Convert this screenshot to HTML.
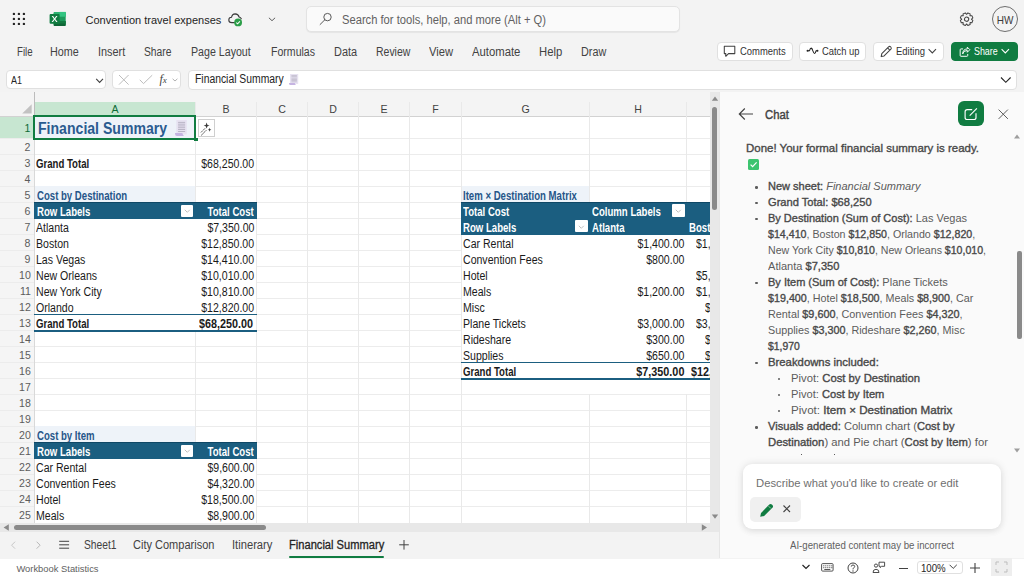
<!DOCTYPE html>
<html><head><meta charset="utf-8"><title>Excel</title>
<style>
html,body{margin:0;padding:0;}
body{width:1024px;height:576px;overflow:hidden;position:relative;background:#f3f3f3;font-family:"Liberation Sans", sans-serif;}
b{font-weight:700;}
</style></head><body>
<svg style="position:absolute;left:0px;top:0px;" width="40" height="40" viewBox="0 0 40 40"><circle cx="13.9" cy="13.9" r="1.2" fill="#242424"/><circle cx="13.9" cy="18.9" r="1.2" fill="#242424"/><circle cx="13.9" cy="23.9" r="1.2" fill="#242424"/><circle cx="18.9" cy="13.9" r="1.2" fill="#242424"/><circle cx="18.9" cy="18.9" r="1.2" fill="#242424"/><circle cx="18.9" cy="23.9" r="1.2" fill="#242424"/><circle cx="23.9" cy="13.9" r="1.2" fill="#242424"/><circle cx="23.9" cy="18.9" r="1.2" fill="#242424"/><circle cx="23.9" cy="23.9" r="1.2" fill="#242424"/></svg>
<svg style="position:absolute;left:44px;top:6px;" width="30" height="26" viewBox="0 0 30 26">
<rect x="9.7" y="5.9" width="12" height="14" rx="1" fill="#1d9a5b"/>
<path d="M10.7 5.9 H20.7 Q21.7 5.9 21.7 6.9 V10.6 H9.7 V6.9 Q9.7 5.9 10.7 5.9 Z" fill="#2cb371"/>
<rect x="15.5" y="5.9" width="6.2" height="4.7" fill="#33c481"/>
<rect x="9.7" y="15" width="12" height="4.9" rx="1" fill="#0f6636"/>
<rect x="9.7" y="15" width="12" height="2.5" fill="#127a41"/>
<rect x="5.6" y="8.1" width="10" height="9.7" rx="1" fill="#107c41"/>
<path d="M7.7 9.9 L9.1 9.9 L10.6 12.2 L12.1 9.9 L13.5 9.9 L11.3 13 L13.6 16.1 L12.2 16.1 L10.6 13.8 L9 16.1 L7.6 16.1 L9.9 13 Z" fill="#fff"/>
</svg>
<div style="position:absolute;top:14.89px;font-size:11px;line-height:11px;font-weight:400;color:#242424;white-space:nowrap;left:85.5px;transform-origin:left;">Convention travel expenses</div>
<svg style="position:absolute;left:222px;top:8px;" width="24" height="22" viewBox="0 0 24 22">
<path d="M12.5 14.6 H9.8 Q6.8 14.6 6.8 11.9 Q6.9 9.4 9.5 9.3 Q10.2 6 13.2 5.9 Q16.3 6 17.1 9 Q18.6 9.4 19.3 10.8" fill="none" stroke="#3b3b3b" stroke-width="1.1" stroke-linecap="round"/>
<circle cx="16.1" cy="14.4" r="3.9" fill="#2b9e48"/>
<path d="M14.3 14.6 L15.6 15.8 L17.9 13.3" fill="none" stroke="#fff" stroke-width="1.05"/>
</svg>
<svg style="position:absolute;left:266px;top:15px;" width="12" height="10" viewBox="0 0 12 10"><path d="M2.9 2.8 L6 5.7 L9.1 2.8" fill="none" stroke="#555" stroke-width=".95"/></svg>
<div style="position:absolute;left:305.8px;top:6.3px;width:374.6px;height:25.9px;background:#fafafa;border:1px solid #e3e3e3;border-radius:5px;box-sizing:border-box;box-shadow:0 1px 1px rgba(0,0,0,.06);"></div>
<svg style="position:absolute;left:318px;top:11px;" width="16" height="16" viewBox="0 0 16 16"><circle cx="9.5" cy="6.1" r="3.7" fill="none" stroke="#505050" stroke-width=".95"/><path d="M6.9 8.7 L2.1 13.5" stroke="#505050" stroke-width=".95" stroke-linecap="round"/></svg>
<div style="position:absolute;left:341.8px;top:13.74px;font-size:12px;line-height:12px;color:#616161;white-space:nowrap;transform-origin:left;transform:scaleX(0.9310);">Search for tools, help, and more (Alt + Q)</div>
<svg style="position:absolute;left:957px;top:10px;" width="18" height="18" viewBox="0 0 18 18"><g transform="translate(9.6,9.2) rotate(22.5)"><path d="M4.59 -1.73 L6.27 -1.27 L6.27 1.27 L4.59 1.73 L4.46 2.02 L5.33 3.54 L3.54 5.33 L2.02 4.46 L1.73 4.59 L1.27 6.27 L-1.27 6.27 L-1.73 4.59 L-2.02 4.46 L-3.54 5.33 L-5.33 3.54 L-4.46 2.02 L-4.59 1.73 L-6.27 1.27 L-6.27 -1.27 L-4.59 -1.73 L-4.46 -2.02 L-5.33 -3.54 L-3.54 -5.33 L-2.02 -4.46 L-1.73 -4.59 L-1.27 -6.27 L1.27 -6.27 L1.73 -4.59 L2.02 -4.46 L3.54 -5.33 L5.33 -3.54 L4.46 -2.02 Z" fill="none" stroke="#424242" stroke-width="1" stroke-linejoin="round"/><circle r="2.1" fill="none" stroke="#424242" stroke-width="1"/></g></svg>
<div style="position:absolute;left:991.5px;top:6px;width:26px;height:26px;border:1px solid #6e6e6e;border-radius:50%;box-sizing:border-box;"></div>
<div style="position:absolute;top:15.19px;font-size:11px;line-height:11px;font-weight:400;color:#3a3a3a;white-space:nowrap;left:1004.9px;transform:translateX(-50%) scaleX(0.91);transform-origin:center;">HW</div>
<div style="position:absolute;left:716.5px;top:41.5px;width:76px;height:19.5px;background:#fff;border:1px solid #e0e0e0;border-radius:4px;box-sizing:border-box;"></div>
<div style="position:absolute;left:799.3px;top:41.5px;width:66.3px;height:19.5px;background:#fff;border:1px solid #e0e0e0;border-radius:4px;box-sizing:border-box;"></div>
<div style="position:absolute;left:872.5px;top:41.5px;width:71.8px;height:19.5px;background:#fff;border:1px solid #e0e0e0;border-radius:4px;box-sizing:border-box;"></div>
<div style="position:absolute;left:951px;top:41.5px;width:66.5px;height:19.5px;background:#107c41;border:1px solid #107c41;border-radius:4px;box-sizing:border-box;"></div>
<svg style="position:absolute;left:723px;top:45px;" width="14" height="13" viewBox="0 0 14 13"><path d="M1.3 1.3 H11.8 V8.6 H5.5 L2.8 11.3 V8.6 H1.3 Z" fill="none" stroke="#424242" stroke-width="1.05" stroke-linejoin="round"/></svg>
<svg style="position:absolute;left:805px;top:45px;" width="14" height="12" viewBox="0 0 14 12"><path d="M2.6 5.8 H4.4 Q5.3 3.1 6.2 3.1 Q7.1 3.2 7.9 5.9 Q8.8 8.5 9.6 8.5 Q10.4 8.4 11 5.8 H12.4" fill="none" stroke="#242424" stroke-width="1.1" stroke-linejoin="round"/><circle cx="2.6" cy="5.8" r="1.05" fill="#242424"/><circle cx="12.4" cy="5.8" r="1.05" fill="#242424"/></svg>
<svg style="position:absolute;left:879px;top:45px;" width="14" height="13" viewBox="0 0 14 13"><path d="M2.2 11.6 L2.8 8.6 L9.6 1.8 Q10.7 0.9 11.8 2 Q12.8 3.1 11.9 4.1 L5.1 10.9 Z M8.6 2.9 L10.8 5.1" fill="none" stroke="#424242" stroke-width="1.05" stroke-linejoin="round"/></svg>
<svg style="position:absolute;left:927px;top:46px;" width="11" height="10" viewBox="0 0 11 10"><path d="M1.6 3.2 L5.3 6.9 L9 3.2" fill="none" stroke="#424242" stroke-width="1.1"/></svg>
<svg style="position:absolute;left:957px;top:45px;" width="14" height="13" viewBox="0 0 14 13"><g transform="translate(1.9,1.4) scale(.84)"><path d="M5 3 H2.5 Q1.5 3 1.5 4 V10.8 Q1.5 11.8 2.5 11.8 H9.5 Q10.5 11.8 10.5 10.8 V9" fill="none" stroke="#fff" stroke-width="1.15"/><path d="M4.5 9 Q5 5 10 4.8 V7 L13 3.9 L10 0.9 V3 Q4.5 3.3 4.5 9 Z" fill="none" stroke="#fff" stroke-width="1.15" stroke-linejoin="round"/></g></svg>
<svg style="position:absolute;left:1000px;top:46px;" width="11" height="10" viewBox="0 0 11 10"><path d="M1.6 3.2 L5.3 6.9 L9 3.2" fill="none" stroke="#fff" stroke-width="1.1"/></svg>
<div style="position:absolute;left:6px;top:70.3px;width:100px;height:18.8px;background:#fff;border:1px solid #e0e0e0;border-radius:4px;box-sizing:border-box;"></div>
<svg style="position:absolute;left:94px;top:76px;" width="12" height="10" viewBox="0 0 12 10"><path d="M2.2 2.8 L5.6 6.4 L9 2.8" fill="none" stroke="#424242" stroke-width="1.1"/></svg>
<div style="position:absolute;left:112.2px;top:70.3px;width:69px;height:18.5px;background:#fff;border:1px solid #e0e0e0;border-radius:4px;box-sizing:border-box;"></div>
<svg style="position:absolute;left:117px;top:74px;" width="14" height="12" viewBox="0 0 14 12"><path d="M2 1 L11.6 10.6 M11.6 1 L2 10.6" stroke="#bdbdbd" stroke-width="1"/></svg>
<svg style="position:absolute;left:138px;top:74px;" width="16" height="12" viewBox="0 0 16 12"><path d="M1.8 5.8 L5.5 9.6 L14.2 1.2" fill="none" stroke="#bdbdbd" stroke-width="1"/></svg>
<div style="position:absolute;left:159.5px;top:72px;font-family:'Liberation Serif',serif;font-style:italic;font-size:12px;line-height:14px;color:#424242;">f<span style="font-size:9px;">x</span></div>
<svg style="position:absolute;left:172px;top:78px;" width="6" height="4" viewBox="0 0 6 4"><path d="M0.6 0.8 L3 3 L5.4 0.8" fill="none" stroke="#9e9e9e" stroke-width=".8"/></svg>
<div style="position:absolute;left:188px;top:70.3px;width:829px;height:19.3px;background:#fff;border:1px solid #e0e0e0;border-radius:4px;box-sizing:border-box;"></div>
<svg style="position:absolute;left:999px;top:75px;" width="14" height="10" viewBox="0 0 14 10"><path d="M2 2.5 L6.8 7.3 L11.6 2.5" fill="none" stroke="#242424" stroke-width="1.1"/></svg>
<div style="position:absolute;left:0px;top:92px;width:720px;height:466px;background:#f3f3f3;"></div>
<div style="position:absolute;left:34px;top:117px;width:676px;height:406px;background:#fff;"></div>
<div style="position:absolute;left:0px;top:92px;width:710px;height:25px;background:#f4f4f4;"></div>
<div style="position:absolute;left:0px;top:117px;width:34px;height:406px;background:#f5f5f5;"></div>
<div style="position:absolute;left:34px;top:102px;width:161px;height:15px;background:#c7e6d1;"></div>
<div style="position:absolute;left:0px;top:117px;width:34px;height:22px;background:#c7e6d1;"></div>
<div style="position:absolute;left:0px;top:138px;width:710px;height:1px;background:#ececec;"></div>
<div style="position:absolute;left:0px;top:154px;width:710px;height:1px;background:#ececec;"></div>
<div style="position:absolute;left:0px;top:170px;width:710px;height:1px;background:#ececec;"></div>
<div style="position:absolute;left:0px;top:186px;width:710px;height:1px;background:#ececec;"></div>
<div style="position:absolute;left:0px;top:202px;width:710px;height:1px;background:#ececec;"></div>
<div style="position:absolute;left:0px;top:218px;width:710px;height:1px;background:#ececec;"></div>
<div style="position:absolute;left:0px;top:234px;width:710px;height:1px;background:#ececec;"></div>
<div style="position:absolute;left:0px;top:250px;width:710px;height:1px;background:#ececec;"></div>
<div style="position:absolute;left:0px;top:266px;width:710px;height:1px;background:#ececec;"></div>
<div style="position:absolute;left:0px;top:282px;width:710px;height:1px;background:#ececec;"></div>
<div style="position:absolute;left:0px;top:298px;width:710px;height:1px;background:#ececec;"></div>
<div style="position:absolute;left:0px;top:314px;width:710px;height:1px;background:#ececec;"></div>
<div style="position:absolute;left:0px;top:330px;width:710px;height:1px;background:#ececec;"></div>
<div style="position:absolute;left:0px;top:346px;width:710px;height:1px;background:#ececec;"></div>
<div style="position:absolute;left:0px;top:362px;width:710px;height:1px;background:#ececec;"></div>
<div style="position:absolute;left:0px;top:378px;width:710px;height:1px;background:#ececec;"></div>
<div style="position:absolute;left:0px;top:394px;width:710px;height:1px;background:#ececec;"></div>
<div style="position:absolute;left:0px;top:410px;width:710px;height:1px;background:#ececec;"></div>
<div style="position:absolute;left:0px;top:426px;width:710px;height:1px;background:#ececec;"></div>
<div style="position:absolute;left:0px;top:442px;width:710px;height:1px;background:#ececec;"></div>
<div style="position:absolute;left:0px;top:458px;width:710px;height:1px;background:#ececec;"></div>
<div style="position:absolute;left:0px;top:474px;width:710px;height:1px;background:#ececec;"></div>
<div style="position:absolute;left:0px;top:490px;width:710px;height:1px;background:#ececec;"></div>
<div style="position:absolute;left:0px;top:506px;width:710px;height:1px;background:#ececec;"></div>
<div style="position:absolute;left:34px;top:115.6px;width:676px;height:1.4px;background:#d2d2d2;"></div>
<div style="position:absolute;left:0px;top:115.6px;width:34px;height:1.4px;background:#d2d2d2;"></div>
<div style="position:absolute;left:195px;top:102px;width:1px;height:421px;background:#e9e9e9;"></div>
<div style="position:absolute;left:256px;top:102px;width:1px;height:421px;background:#e9e9e9;"></div>
<div style="position:absolute;left:307px;top:102px;width:1px;height:421px;background:#e9e9e9;"></div>
<div style="position:absolute;left:358px;top:102px;width:1px;height:421px;background:#e9e9e9;"></div>
<div style="position:absolute;left:409px;top:102px;width:1px;height:421px;background:#e9e9e9;"></div>
<div style="position:absolute;left:461px;top:102px;width:1px;height:421px;background:#e9e9e9;"></div>
<div style="position:absolute;left:589px;top:102px;width:1px;height:421px;background:#e9e9e9;"></div>
<div style="position:absolute;left:686px;top:102px;width:1px;height:421px;background:#e9e9e9;"></div>
<div style="position:absolute;left:34px;top:117px;width:1px;height:406px;background:#d9d9d9;"></div>
<div style="position:absolute;left:33.6px;top:92px;width:1.6px;height:25px;background:#bcbcbc;"></div>
<div style="position:absolute;top:104.23px;font-size:10.6px;line-height:10.6px;font-weight:400;color:#0e6b37;white-space:nowrap;left:115.0px;transform:translateX(-50%) scaleX(1.0);transform-origin:center;">A</div>
<div style="position:absolute;top:104.23px;font-size:10.6px;line-height:10.6px;font-weight:400;color:#424242;white-space:nowrap;left:226.0px;transform:translateX(-50%) scaleX(1.0);transform-origin:center;">B</div>
<div style="position:absolute;top:104.23px;font-size:10.6px;line-height:10.6px;font-weight:400;color:#424242;white-space:nowrap;left:282.0px;transform:translateX(-50%) scaleX(1.0);transform-origin:center;">C</div>
<div style="position:absolute;top:104.23px;font-size:10.6px;line-height:10.6px;font-weight:400;color:#424242;white-space:nowrap;left:333.0px;transform:translateX(-50%) scaleX(1.0);transform-origin:center;">D</div>
<div style="position:absolute;top:104.23px;font-size:10.6px;line-height:10.6px;font-weight:400;color:#424242;white-space:nowrap;left:384.0px;transform:translateX(-50%) scaleX(1.0);transform-origin:center;">E</div>
<div style="position:absolute;top:104.23px;font-size:10.6px;line-height:10.6px;font-weight:400;color:#424242;white-space:nowrap;left:435.5px;transform:translateX(-50%) scaleX(1.0);transform-origin:center;">F</div>
<div style="position:absolute;top:104.23px;font-size:10.6px;line-height:10.6px;font-weight:400;color:#424242;white-space:nowrap;left:525.5px;transform:translateX(-50%) scaleX(1.0);transform-origin:center;">G</div>
<div style="position:absolute;top:104.23px;font-size:10.6px;line-height:10.6px;font-weight:400;color:#424242;white-space:nowrap;left:638.0px;transform:translateX(-50%) scaleX(1.0);transform-origin:center;">H</div>
<div style="position:absolute;top:104.23px;font-size:10.6px;line-height:10.6px;font-weight:400;color:#424242;white-space:nowrap;left:711.5px;transform:translateX(-50%) scaleX(1.0);transform-origin:center;">I</div>
<div style="position:absolute;top:122.87px;font-size:11.5px;line-height:11.5px;font-weight:400;color:#0e6b37;white-space:nowrap;right:993.5px;transform-origin:right;transform:scaleX(0.92);">1</div>
<div style="position:absolute;top:142.37px;font-size:11.5px;line-height:11.5px;font-weight:400;color:#5c5c5c;white-space:nowrap;right:993.5px;transform-origin:right;transform:scaleX(0.92);">2</div>
<div style="position:absolute;top:158.37px;font-size:11.5px;line-height:11.5px;font-weight:400;color:#5c5c5c;white-space:nowrap;right:993.5px;transform-origin:right;transform:scaleX(0.92);">3</div>
<div style="position:absolute;top:174.37px;font-size:11.5px;line-height:11.5px;font-weight:400;color:#5c5c5c;white-space:nowrap;right:993.5px;transform-origin:right;transform:scaleX(0.92);">4</div>
<div style="position:absolute;top:190.37px;font-size:11.5px;line-height:11.5px;font-weight:400;color:#5c5c5c;white-space:nowrap;right:993.5px;transform-origin:right;transform:scaleX(0.92);">5</div>
<div style="position:absolute;top:206.37px;font-size:11.5px;line-height:11.5px;font-weight:400;color:#5c5c5c;white-space:nowrap;right:993.5px;transform-origin:right;transform:scaleX(0.92);">6</div>
<div style="position:absolute;top:222.37px;font-size:11.5px;line-height:11.5px;font-weight:400;color:#5c5c5c;white-space:nowrap;right:993.5px;transform-origin:right;transform:scaleX(0.92);">7</div>
<div style="position:absolute;top:238.37px;font-size:11.5px;line-height:11.5px;font-weight:400;color:#5c5c5c;white-space:nowrap;right:993.5px;transform-origin:right;transform:scaleX(0.92);">8</div>
<div style="position:absolute;top:254.37px;font-size:11.5px;line-height:11.5px;font-weight:400;color:#5c5c5c;white-space:nowrap;right:993.5px;transform-origin:right;transform:scaleX(0.92);">9</div>
<div style="position:absolute;top:270.37px;font-size:11.5px;line-height:11.5px;font-weight:400;color:#5c5c5c;white-space:nowrap;right:993.5px;transform-origin:right;transform:scaleX(0.92);">10</div>
<div style="position:absolute;top:286.37px;font-size:11.5px;line-height:11.5px;font-weight:400;color:#5c5c5c;white-space:nowrap;right:993.5px;transform-origin:right;transform:scaleX(0.92);">11</div>
<div style="position:absolute;top:302.37px;font-size:11.5px;line-height:11.5px;font-weight:400;color:#5c5c5c;white-space:nowrap;right:993.5px;transform-origin:right;transform:scaleX(0.92);">12</div>
<div style="position:absolute;top:318.37px;font-size:11.5px;line-height:11.5px;font-weight:400;color:#5c5c5c;white-space:nowrap;right:993.5px;transform-origin:right;transform:scaleX(0.92);">13</div>
<div style="position:absolute;top:334.37px;font-size:11.5px;line-height:11.5px;font-weight:400;color:#5c5c5c;white-space:nowrap;right:993.5px;transform-origin:right;transform:scaleX(0.92);">14</div>
<div style="position:absolute;top:350.37px;font-size:11.5px;line-height:11.5px;font-weight:400;color:#5c5c5c;white-space:nowrap;right:993.5px;transform-origin:right;transform:scaleX(0.92);">15</div>
<div style="position:absolute;top:366.37px;font-size:11.5px;line-height:11.5px;font-weight:400;color:#5c5c5c;white-space:nowrap;right:993.5px;transform-origin:right;transform:scaleX(0.92);">16</div>
<div style="position:absolute;top:382.37px;font-size:11.5px;line-height:11.5px;font-weight:400;color:#5c5c5c;white-space:nowrap;right:993.5px;transform-origin:right;transform:scaleX(0.92);">17</div>
<div style="position:absolute;top:398.37px;font-size:11.5px;line-height:11.5px;font-weight:400;color:#5c5c5c;white-space:nowrap;right:993.5px;transform-origin:right;transform:scaleX(0.92);">18</div>
<div style="position:absolute;top:414.37px;font-size:11.5px;line-height:11.5px;font-weight:400;color:#5c5c5c;white-space:nowrap;right:993.5px;transform-origin:right;transform:scaleX(0.92);">19</div>
<div style="position:absolute;top:430.37px;font-size:11.5px;line-height:11.5px;font-weight:400;color:#5c5c5c;white-space:nowrap;right:993.5px;transform-origin:right;transform:scaleX(0.92);">20</div>
<div style="position:absolute;top:446.37px;font-size:11.5px;line-height:11.5px;font-weight:400;color:#5c5c5c;white-space:nowrap;right:993.5px;transform-origin:right;transform:scaleX(0.92);">21</div>
<div style="position:absolute;top:462.37px;font-size:11.5px;line-height:11.5px;font-weight:400;color:#5c5c5c;white-space:nowrap;right:993.5px;transform-origin:right;transform:scaleX(0.92);">22</div>
<div style="position:absolute;top:478.37px;font-size:11.5px;line-height:11.5px;font-weight:400;color:#5c5c5c;white-space:nowrap;right:993.5px;transform-origin:right;transform:scaleX(0.92);">23</div>
<div style="position:absolute;top:494.37px;font-size:11.5px;line-height:11.5px;font-weight:400;color:#5c5c5c;white-space:nowrap;right:993.5px;transform-origin:right;transform:scaleX(0.92);">24</div>
<div style="position:absolute;top:510.37px;font-size:11.5px;line-height:11.5px;font-weight:400;color:#5c5c5c;white-space:nowrap;right:993.5px;transform-origin:right;transform:scaleX(0.92);">25</div>
<svg style="position:absolute;left:20px;top:103px;" width="13" height="13" viewBox="0 0 13 13"><path d="M11.7 1.3 L11.7 10.6 L2.2 10.6 Z" fill="#c2c2c2"/></svg>
<div style="position:absolute;left:35px;top:117px;width:160px;height:22px;background:#eef2f9;"></div>
<div style="position:absolute;top:120.66px;font-size:16px;line-height:16px;font-weight:700;color:#2a5b90;white-space:nowrap;left:37.8px;transform-origin:left;transform:scaleX(0.88);">Financial Summary</div>
<svg style="position:absolute;left:175.2px;top:120px;" width="12.8" height="16" viewBox="0 0 12.8 16"><rect x="1.28" y="0" width="10.50" height="14.40" fill="#e7e2f1"/><rect x="3.07" y="1.92" width="7.04" height="0.72" fill="#a9a4b6"/><rect x="3.07" y="3.76" width="7.04" height="0.72" fill="#a9a4b6"/><rect x="3.07" y="5.60" width="7.04" height="0.72" fill="#a9a4b6"/><rect x="3.07" y="7.44" width="7.04" height="0.72" fill="#a9a4b6"/><rect x="3.07" y="9.28" width="7.04" height="0.72" fill="#a9a4b6"/><rect x="3.07" y="11.12" width="7.04" height="0.72" fill="#a9a4b6"/>
<path d="M0 13.76 Q0 16.00 1.92 16.00 H8.96 Q7.42 14.88 7.42 13.12 H0 Z" fill="#c6b4e2"/></svg>
<div style="position:absolute;left:33px;top:115px;width:163px;height:25px;border:2px solid #107c41;box-sizing:border-box;"></div>
<div style="position:absolute;left:194px;top:137.6px;width:3.6px;height:3.6px;background:#107c41;"></div>
<div style="position:absolute;left:198.2px;top:119.1px;width:16.5px;height:17.6px;background:#fff;border:1px solid #cfcfcf;box-sizing:border-box;"></div>
<svg style="position:absolute;left:198px;top:119px;" width="17" height="18" viewBox="0 0 17 18"><path d="M8.6 3.6 L9.5 5.9 L11.6 6.6 L9.5 7.3 L8.6 9.6 L7.7 7.3 L5.6 6.6 L7.7 5.9 Z" fill="#3a3a3a"/><path d="M11.6 8.8 L12.1 10.3 L13.4 10.8 L12.1 11.3 L11.6 12.8 L11.1 11.3 L9.8 10.8 L11.1 10.3 Z" fill="#3a3a3a"/><path d="M3.2 13.2 L4.6 11.8 M5.6 10.8 L6.8 9.6 M3.4 16.2 L4.6 15 M5.4 14.2 L6.6 13 M7.3 12.3 L8.2 11.4" stroke="#555" stroke-width=".9" stroke-linecap="round"/></svg>
<div style="position:absolute;top:158.14px;font-size:12px;line-height:12px;font-weight:700;color:#1a1a1a;white-space:nowrap;left:36.3px;transform-origin:left;transform:scaleX(0.8);">Grand Total</div>
<div style="position:absolute;top:158.14px;font-size:12px;line-height:12px;font-weight:400;color:#1a1a1a;white-space:nowrap;right:770px;transform-origin:right;transform:scaleX(0.88);">$68,250.00</div>
<div style="position:absolute;left:35px;top:186px;width:160px;height:17px;background:#eef3f9;"></div>
<div style="position:absolute;top:190.14px;font-size:12px;line-height:12px;font-weight:700;color:#265689;white-space:nowrap;left:36.5px;transform-origin:left;transform:scaleX(0.8);">Cost by Destination</div>
<div style="position:absolute;left:34px;top:202px;width:223px;height:17px;background:#1b5e80;border-top:1px solid #0f4866;box-sizing:border-box;"></div>
<div style="position:absolute;top:206.14px;font-size:12px;line-height:12px;font-weight:700;color:#fff;white-space:nowrap;left:36.7px;transform-origin:left;transform:scaleX(0.8);">Row Labels</div>
<div style="position:absolute;left:180.6px;top:204.8px;width:12.6px;height:12.2px;background:#fff;border-radius:1px;"></div>
<svg style="position:absolute;left:180.6px;top:205.4px;" width="13" height="12" viewBox="0 0 13 12"><path d="M3.8 4.8 L6.3 7.3 L8.8 4.8" fill="none" stroke="#b0b0b0" stroke-width=".8"/></svg>
<div style="position:absolute;top:206.14px;font-size:12px;line-height:12px;font-weight:700;color:#fff;white-space:nowrap;right:769.8px;transform-origin:right;transform:scaleX(0.8);">Total Cost</div>
<div style="position:absolute;left:35px;top:219px;width:221px;height:113px;background:#fff;"></div>
<div style="position:absolute;top:222.14px;font-size:12px;line-height:12px;font-weight:400;color:#1a1a1a;white-space:nowrap;left:36.3px;transform-origin:left;transform:scaleX(0.88);">Atlanta</div>
<div style="position:absolute;top:222.14px;font-size:12px;line-height:12px;font-weight:400;color:#1a1a1a;white-space:nowrap;right:770px;transform-origin:right;transform:scaleX(0.88);">$7,350.00</div>
<div style="position:absolute;top:238.14px;font-size:12px;line-height:12px;font-weight:400;color:#1a1a1a;white-space:nowrap;left:36.3px;transform-origin:left;transform:scaleX(0.88);">Boston</div>
<div style="position:absolute;top:238.14px;font-size:12px;line-height:12px;font-weight:400;color:#1a1a1a;white-space:nowrap;right:770px;transform-origin:right;transform:scaleX(0.88);">$12,850.00</div>
<div style="position:absolute;top:254.14px;font-size:12px;line-height:12px;font-weight:400;color:#1a1a1a;white-space:nowrap;left:36.3px;transform-origin:left;transform:scaleX(0.88);">Las Vegas</div>
<div style="position:absolute;top:254.14px;font-size:12px;line-height:12px;font-weight:400;color:#1a1a1a;white-space:nowrap;right:770px;transform-origin:right;transform:scaleX(0.88);">$14,410.00</div>
<div style="position:absolute;top:270.14px;font-size:12px;line-height:12px;font-weight:400;color:#1a1a1a;white-space:nowrap;left:36.3px;transform-origin:left;transform:scaleX(0.88);">New Orleans</div>
<div style="position:absolute;top:270.14px;font-size:12px;line-height:12px;font-weight:400;color:#1a1a1a;white-space:nowrap;right:770px;transform-origin:right;transform:scaleX(0.88);">$10,010.00</div>
<div style="position:absolute;top:286.14px;font-size:12px;line-height:12px;font-weight:400;color:#1a1a1a;white-space:nowrap;left:36.3px;transform-origin:left;transform:scaleX(0.88);">New York City</div>
<div style="position:absolute;top:286.14px;font-size:12px;line-height:12px;font-weight:400;color:#1a1a1a;white-space:nowrap;right:770px;transform-origin:right;transform:scaleX(0.88);">$10,810.00</div>
<div style="position:absolute;top:302.14px;font-size:12px;line-height:12px;font-weight:400;color:#1a1a1a;white-space:nowrap;left:36.3px;transform-origin:left;transform:scaleX(0.88);">Orlando</div>
<div style="position:absolute;top:302.14px;font-size:12px;line-height:12px;font-weight:400;color:#1a1a1a;white-space:nowrap;right:770px;transform-origin:right;transform:scaleX(0.88);">$12,820.00</div>
<div style="position:absolute;left:34px;top:314px;width:223px;height:1.2px;background:#1b5e80;"></div>
<div style="position:absolute;left:34px;top:329.5px;width:223px;height:2px;background:#1b5e80;"></div>
<div style="position:absolute;top:318.14px;font-size:12px;line-height:12px;font-weight:700;color:#1a1a1a;white-space:nowrap;left:36.3px;transform-origin:left;transform:scaleX(0.8);">Grand Total</div>
<div style="position:absolute;top:318.14px;font-size:12px;line-height:12px;font-weight:700;color:#1a1a1a;white-space:nowrap;right:770.5px;transform-origin:right;transform:scaleX(0.9);">$68,250.00</div>
<div style="position:absolute;left:35px;top:426px;width:160px;height:17px;background:#eef3f9;"></div>
<div style="position:absolute;top:430.14px;font-size:12px;line-height:12px;font-weight:700;color:#265689;white-space:nowrap;left:36.5px;transform-origin:left;transform:scaleX(0.8);">Cost by Item</div>
<div style="position:absolute;left:34px;top:442px;width:223px;height:17px;background:#1b5e80;border-top:1px solid #0f4866;box-sizing:border-box;"></div>
<div style="position:absolute;top:446.14px;font-size:12px;line-height:12px;font-weight:700;color:#fff;white-space:nowrap;left:36.7px;transform-origin:left;transform:scaleX(0.8);">Row Labels</div>
<div style="position:absolute;left:180.6px;top:444.79999999999995px;width:12.6px;height:12.2px;background:#fff;border-radius:1px;"></div>
<svg style="position:absolute;left:180.6px;top:445.4px;" width="13" height="12" viewBox="0 0 13 12"><path d="M3.8 4.8 L6.3 7.3 L8.8 4.8" fill="none" stroke="#b0b0b0" stroke-width=".8"/></svg>
<div style="position:absolute;top:446.14px;font-size:12px;line-height:12px;font-weight:700;color:#fff;white-space:nowrap;right:769.8px;transform-origin:right;transform:scaleX(0.8);">Total Cost</div>
<div style="position:absolute;left:35px;top:459px;width:221px;height:64px;background:#fff;"></div>
<div style="position:absolute;top:462.14px;font-size:12px;line-height:12px;font-weight:400;color:#1a1a1a;white-space:nowrap;left:36.3px;transform-origin:left;transform:scaleX(0.88);">Car Rental</div>
<div style="position:absolute;top:462.14px;font-size:12px;line-height:12px;font-weight:400;color:#1a1a1a;white-space:nowrap;right:770px;transform-origin:right;transform:scaleX(0.88);">$9,600.00</div>
<div style="position:absolute;top:478.14px;font-size:12px;line-height:12px;font-weight:400;color:#1a1a1a;white-space:nowrap;left:36.3px;transform-origin:left;transform:scaleX(0.88);">Convention Fees</div>
<div style="position:absolute;top:478.14px;font-size:12px;line-height:12px;font-weight:400;color:#1a1a1a;white-space:nowrap;right:770px;transform-origin:right;transform:scaleX(0.88);">$4,320.00</div>
<div style="position:absolute;top:494.14px;font-size:12px;line-height:12px;font-weight:400;color:#1a1a1a;white-space:nowrap;left:36.3px;transform-origin:left;transform:scaleX(0.88);">Hotel</div>
<div style="position:absolute;top:494.14px;font-size:12px;line-height:12px;font-weight:400;color:#1a1a1a;white-space:nowrap;right:770px;transform-origin:right;transform:scaleX(0.88);">$18,500.00</div>
<div style="position:absolute;top:510.14px;font-size:12px;line-height:12px;font-weight:400;color:#1a1a1a;white-space:nowrap;left:36.3px;transform-origin:left;transform:scaleX(0.88);">Meals</div>
<div style="position:absolute;top:510.14px;font-size:12px;line-height:12px;font-weight:400;color:#1a1a1a;white-space:nowrap;right:770px;transform-origin:right;transform:scaleX(0.88);">$8,900.00</div>
<div style="position:absolute;left:462px;top:186px;width:127px;height:17px;background:#eef3f9;"></div>
<div style="position:absolute;top:190.14px;font-size:12px;line-height:12px;font-weight:700;color:#265689;white-space:nowrap;left:462.6px;transform-origin:left;transform:scaleX(0.8);">Item × Destination Matrix</div>
<div style="position:absolute;left:461px;top:202px;width:249px;height:33px;background:#1b5e80;border-top:1px solid #0f4866;box-sizing:border-box;"></div>
<div style="position:absolute;top:206.14px;font-size:12px;line-height:12px;font-weight:700;color:#fff;white-space:nowrap;left:462.6px;transform-origin:left;transform:scaleX(0.8);">Total Cost</div>
<div style="position:absolute;top:206.14px;font-size:12px;line-height:12px;font-weight:700;color:#fff;white-space:nowrap;left:591.6px;transform-origin:left;transform:scaleX(0.8);">Column Labels</div>
<div style="position:absolute;left:672px;top:204.4px;width:12.6px;height:12.2px;background:#fff;border-radius:1px;"></div>
<svg style="position:absolute;left:672px;top:205px;" width="13" height="12" viewBox="0 0 13 12"><path d="M3.8 4.8 L6.3 7.3 L8.8 4.8" fill="none" stroke="#b0b0b0" stroke-width=".8"/></svg>
<div style="position:absolute;top:222.14px;font-size:12px;line-height:12px;font-weight:700;color:#fff;white-space:nowrap;left:462.6px;transform-origin:left;transform:scaleX(0.8);">Row Labels</div>
<div style="position:absolute;left:575px;top:220.20000000000002px;width:12.6px;height:12.2px;background:#fff;border-radius:1px;"></div>
<svg style="position:absolute;left:575px;top:220.8px;" width="13" height="12" viewBox="0 0 13 12"><path d="M3.8 4.8 L6.3 7.3 L8.8 4.8" fill="none" stroke="#b0b0b0" stroke-width=".8"/></svg>
<div style="position:absolute;top:222.14px;font-size:12px;line-height:12px;font-weight:700;color:#fff;white-space:nowrap;left:591.6px;transform-origin:left;transform:scaleX(0.8);">Atlanta</div>
<div style="position:absolute;top:222.14px;font-size:12px;line-height:12px;font-weight:700;color:#fff;white-space:nowrap;left:688.6px;transform-origin:left;transform:scaleX(0.8);">Bosto</div>
<div style="position:absolute;left:462px;top:235px;width:248px;height:144px;background:#fff;"></div>
<div style="position:absolute;top:238.14px;font-size:12px;line-height:12px;font-weight:400;color:#1a1a1a;white-space:nowrap;left:462.8px;transform-origin:left;transform:scaleX(0.88);">Car Rental</div>
<div style="position:absolute;top:238.14px;font-size:12px;line-height:12px;font-weight:400;color:#1a1a1a;white-space:nowrap;right:340px;transform-origin:right;transform:scaleX(0.88);">$1,400.00</div>
<div style="position:absolute;top:238.14px;font-size:12px;line-height:12px;font-weight:400;color:#1a1a1a;white-space:nowrap;left:696px;transform-origin:left;transform:scaleX(0.88);">$1,</div>
<div style="position:absolute;top:254.14px;font-size:12px;line-height:12px;font-weight:400;color:#1a1a1a;white-space:nowrap;left:462.8px;transform-origin:left;transform:scaleX(0.88);">Convention Fees</div>
<div style="position:absolute;top:254.14px;font-size:12px;line-height:12px;font-weight:400;color:#1a1a1a;white-space:nowrap;right:340px;transform-origin:right;transform:scaleX(0.88);">$800.00</div>
<div style="position:absolute;top:270.14px;font-size:12px;line-height:12px;font-weight:400;color:#1a1a1a;white-space:nowrap;left:462.8px;transform-origin:left;transform:scaleX(0.88);">Hotel</div>
<div style="position:absolute;top:270.14px;font-size:12px;line-height:12px;font-weight:400;color:#1a1a1a;white-space:nowrap;left:696px;transform-origin:left;transform:scaleX(0.88);">$5,</div>
<div style="position:absolute;top:286.14px;font-size:12px;line-height:12px;font-weight:400;color:#1a1a1a;white-space:nowrap;left:462.8px;transform-origin:left;transform:scaleX(0.88);">Meals</div>
<div style="position:absolute;top:286.14px;font-size:12px;line-height:12px;font-weight:400;color:#1a1a1a;white-space:nowrap;right:340px;transform-origin:right;transform:scaleX(0.88);">$1,200.00</div>
<div style="position:absolute;top:286.14px;font-size:12px;line-height:12px;font-weight:400;color:#1a1a1a;white-space:nowrap;left:696px;transform-origin:left;transform:scaleX(0.88);">$1,</div>
<div style="position:absolute;top:302.14px;font-size:12px;line-height:12px;font-weight:400;color:#1a1a1a;white-space:nowrap;left:462.8px;transform-origin:left;transform:scaleX(0.88);">Misc</div>
<div style="position:absolute;top:302.14px;font-size:12px;line-height:12px;font-weight:400;color:#1a1a1a;white-space:nowrap;left:705px;transform-origin:left;transform:scaleX(0.88);">$</div>
<div style="position:absolute;top:318.14px;font-size:12px;line-height:12px;font-weight:400;color:#1a1a1a;white-space:nowrap;left:462.8px;transform-origin:left;transform:scaleX(0.88);">Plane Tickets</div>
<div style="position:absolute;top:318.14px;font-size:12px;line-height:12px;font-weight:400;color:#1a1a1a;white-space:nowrap;right:340px;transform-origin:right;transform:scaleX(0.88);">$3,000.00</div>
<div style="position:absolute;top:318.14px;font-size:12px;line-height:12px;font-weight:400;color:#1a1a1a;white-space:nowrap;left:696px;transform-origin:left;transform:scaleX(0.88);">$3,</div>
<div style="position:absolute;top:334.14px;font-size:12px;line-height:12px;font-weight:400;color:#1a1a1a;white-space:nowrap;left:462.8px;transform-origin:left;transform:scaleX(0.88);">Rideshare</div>
<div style="position:absolute;top:334.14px;font-size:12px;line-height:12px;font-weight:400;color:#1a1a1a;white-space:nowrap;right:340px;transform-origin:right;transform:scaleX(0.88);">$300.00</div>
<div style="position:absolute;top:334.14px;font-size:12px;line-height:12px;font-weight:400;color:#1a1a1a;white-space:nowrap;left:705px;transform-origin:left;transform:scaleX(0.88);">$</div>
<div style="position:absolute;top:350.14px;font-size:12px;line-height:12px;font-weight:400;color:#1a1a1a;white-space:nowrap;left:462.8px;transform-origin:left;transform:scaleX(0.88);">Supplies</div>
<div style="position:absolute;top:350.14px;font-size:12px;line-height:12px;font-weight:400;color:#1a1a1a;white-space:nowrap;right:340px;transform-origin:right;transform:scaleX(0.88);">$650.00</div>
<div style="position:absolute;top:350.14px;font-size:12px;line-height:12px;font-weight:400;color:#1a1a1a;white-space:nowrap;left:705px;transform-origin:left;transform:scaleX(0.88);">$</div>
<div style="position:absolute;left:461px;top:362px;width:249px;height:1.2px;background:#1b5e80;"></div>
<div style="position:absolute;left:461px;top:377.5px;width:249px;height:2px;background:#1b5e80;"></div>
<div style="position:absolute;top:366.14px;font-size:12px;line-height:12px;font-weight:700;color:#1a1a1a;white-space:nowrap;left:462.8px;transform-origin:left;transform:scaleX(0.8);">Grand Total</div>
<div style="position:absolute;top:366.14px;font-size:12px;line-height:12px;font-weight:700;color:#1a1a1a;white-space:nowrap;right:340px;transform-origin:right;transform:scaleX(0.9);">$7,350.00</div>
<div style="position:absolute;top:366.14px;font-size:12px;line-height:12px;font-weight:700;color:#1a1a1a;white-space:nowrap;left:690.5px;transform-origin:left;transform:scaleX(0.9);">$12,</div>
<div style="position:absolute;left:462px;top:379.5px;width:248px;height:14.5px;background:#fff;"></div>
<div style="position:absolute;left:710px;top:92px;width:10px;height:466px;background:#e8e8e8;"></div>
<div style="position:absolute;left:710px;top:92px;width:10px;height:431px;background:#e8e8e8;"></div>
<svg style="position:absolute;left:710px;top:94px;" width="10" height="8" viewBox="0 0 10 8"><path d="M5 2.4 L8.2 6.8 L1.8 6.8 Z" fill="#8a8a8a"/></svg>
<div style="position:absolute;left:711.8px;top:106.5px;width:5.4px;height:103px;background:#8a8a8a;border-radius:3px;"></div>
<svg style="position:absolute;left:710px;top:512px;" width="10" height="8" viewBox="0 0 10 8"><path d="M5 6.8 L8.2 2.4 L1.8 2.4 Z" fill="#8a8a8a"/></svg>
<div style="position:absolute;left:0px;top:523px;width:720px;height:9px;background:#e8e8e8;"></div>
<svg style="position:absolute;left:1px;top:523px;" width="10" height="9" viewBox="0 0 10 9"><path d="M2.6 4.5 L7.8 1.3 L7.8 7.7 Z" fill="#8a8a8a"/></svg>
<div style="position:absolute;left:14.4px;top:525px;width:252px;height:5.2px;background:#8a8a8a;border-radius:3px;"></div>
<svg style="position:absolute;left:699px;top:523px;" width="10" height="9" viewBox="0 0 10 9"><path d="M8 4.5 L2.8 1.3 L2.8 7.7 Z" fill="#8a8a8a"/></svg>
<div style="position:absolute;left:0px;top:532px;width:720px;height:26px;background:#f3f3f3;"></div>
<svg style="position:absolute;left:6px;top:537px;" width="14" height="16" viewBox="0 0 14 16"><path d="M9.1 4.7 L5.6 8.2 L9.1 11.7" fill="none" stroke="#c4c4c4" stroke-width=".95"/></svg>
<svg style="position:absolute;left:32px;top:537px;" width="14" height="16" viewBox="0 0 14 16"><path d="M4.6 4.7 L8.1 8.2 L4.6 11.7" fill="none" stroke="#b4b4b4" stroke-width=".95"/></svg>
<svg style="position:absolute;left:57px;top:539px;" width="14" height="12" viewBox="0 0 14 12"><path d="M2.2 2.3 H12.1 M2.2 5.8 H12.1 M2.2 9.2 H12.1" stroke="#424242" stroke-width="1"/></svg>
<div style="position:absolute;left:288.5px;top:555.6px;width:95.2px;height:2px;background:#107c41;border-radius:1px;"></div>
<svg style="position:absolute;left:397px;top:538px;" width="14" height="14" viewBox="0 0 14 14"><path d="M7 2 V11.6 M2.2 6.8 H11.8" stroke="#424242" stroke-width="1"/></svg>
<div style="position:absolute;left:719.3px;top:92px;width:1px;height:466px;background:#e6e6e6;"></div>
<div style="position:absolute;left:0px;top:558.6px;width:1024px;height:18px;background:#fff;"></div>
<div style="position:absolute;top:563.64px;font-size:9.4px;line-height:9.4px;font-weight:400;color:#616161;white-space:nowrap;left:16.4px;transform-origin:left;">Workbook Statistics</div>
<svg style="position:absolute;left:800px;top:562px;" width="12" height="10" viewBox="0 0 12 10"><path d="M2.5 3 L6 6.5 L9.5 3" fill="none" stroke="#242424" stroke-width="1.2"/></svg>
<svg style="position:absolute;left:821px;top:563px;" width="13" height="9" viewBox="0 0 13 9"><rect x="0.6" y="0.6" width="11.5" height="7.5" rx="1" fill="none" stroke="#424242" stroke-width=".9"/><rect x="2.3" y="2.3" width="1" height="1" fill="#424242"/><rect x="2.3" y="4.2" width="1" height="1" fill="#424242"/><rect x="4.3" y="2.3" width="1" height="1" fill="#424242"/><rect x="4.3" y="4.2" width="1" height="1" fill="#424242"/><rect x="6.3" y="2.3" width="1" height="1" fill="#424242"/><rect x="6.3" y="4.2" width="1" height="1" fill="#424242"/><rect x="8.3" y="2.3" width="1" height="1" fill="#424242"/><rect x="8.3" y="4.2" width="1" height="1" fill="#424242"/><rect x="10.3" y="2.3" width="1" height="1" fill="#424242"/><rect x="10.3" y="4.2" width="1" height="1" fill="#424242"/><rect x="3.3" y="6" width="6" height=".9" fill="#424242"/></svg>
<svg style="position:absolute;left:847px;top:562px;" width="12" height="12" viewBox="0 0 12 12"><circle cx="6" cy="6" r="5" fill="none" stroke="#424242" stroke-width="1"/><path d="M4.3 4.6 Q4.3 3 6 3 Q7.7 3 7.7 4.5 Q7.7 5.5 6.3 6.2 Q6 6.4 6 7.4" fill="none" stroke="#424242" stroke-width=".95"/><circle cx="6" cy="9" r=".65" fill="#424242"/></svg>
<svg style="position:absolute;left:872px;top:561px;" width="14" height="13" viewBox="0 0 14 13"><circle cx="4" cy="4.6" r="1.6" fill="none" stroke="#424242" stroke-width=".95"/><path d="M1 11.5 Q1 8.3 4 8.3 Q7 8.3 7 11.5 Z" fill="none" stroke="#424242" stroke-width=".95"/><path d="M7 1.2 H12.6 V5.3 H9.6 L8.2 6.6 V5.3 H7 Z" fill="none" stroke="#424242" stroke-width=".95" stroke-linejoin="round"/></svg>
<div style="position:absolute;left:899px;top:567.6px;width:9.2px;height:1.1px;background:#424242;"></div>
<div style="position:absolute;left:917px;top:560.5px;width:45.7px;height:13.5px;background:#fff;border:1px solid #e0e0e0;border-radius:3px;box-sizing:border-box;"></div>
<div style="position:absolute;top:562.61px;font-size:10.5px;line-height:10.5px;font-weight:400;color:#242424;white-space:nowrap;left:921px;transform-origin:left;transform:scaleX(0.92);">100%</div>
<svg style="position:absolute;left:948px;top:563px;" width="11" height="8" viewBox="0 0 11 8"><path d="M1.6 1.8 L5.2 5.4 L8.8 1.8" fill="none" stroke="#424242" stroke-width="1"/></svg>
<svg style="position:absolute;left:969px;top:562px;" width="12" height="12" viewBox="0 0 12 12"><path d="M6 1 V11 M1 6 H11" stroke="#424242" stroke-width="1.1"/></svg>
<div style="position:absolute;left:991px;top:557px;width:21.3px;height:19px;background:#eeeeee;"></div>
<svg style="position:absolute;left:995px;top:561px;" width="13" height="12" viewBox="0 0 13 12"><path d="M1 4 V1 H4 M9 1 H12 V4 M12 8 V11 H9 M4 11 H1 V8" fill="none" stroke="#bdbdbd" stroke-width="1"/></svg>
<div style="position:absolute;left:720px;top:92px;width:304px;height:466px;background:#fafafa;"></div>
<svg style="position:absolute;left:737px;top:106px;" width="18" height="16" viewBox="0 0 18 16"><path d="M2.3 8 H16 M7.8 2.5 L2.3 8 L7.8 13.5" fill="none" stroke="#424242" stroke-width="1.15"/></svg>
<div style="position:absolute;left:765px;top:108.64px;font-size:12px;line-height:12px;color:#424242;white-space:nowrap;transform-origin:left;transform:scaleX(0.9425);"><span style="-webkit-text-stroke:.4px #424242">Chat</span></div>
<div style="position:absolute;left:958.4px;top:101px;width:25.3px;height:24.6px;background:#107c41;border-radius:6px;"></div>
<svg style="position:absolute;left:958px;top:101px;" width="26" height="25" viewBox="0 0 26 25"><path d="M14.2 8.6 H9.2 Q7.1 8.6 7.1 10.7 V16.4 Q7.1 18.5 9.2 18.5 H15.9 Q18 18.5 18 16.4 V12.2" fill="none" stroke="#fff" stroke-width="1.15"/><path d="M11.7 14.6 L18.9 7.4" stroke="#fff" stroke-width="1.1"/></svg>
<svg style="position:absolute;left:997px;top:107.6px;" width="13" height="13" viewBox="0 0 13 13"><path d="M1.6 1.6 L10.9 10.9 M10.9 1.6 L1.6 10.9" stroke="#555" stroke-width=".95"/></svg>
<svg style="position:absolute;left:1013px;top:133px;" width="8" height="7" viewBox="0 0 8 7"><path d="M4 1.5 L7 5.5 L1 5.5 Z" fill="#9e9e9e"/></svg>
<div style="position:absolute;left:1017.3px;top:250.6px;width:4.3px;height:88px;background:#8a8a8a;border-radius:2px;"></div>
<svg style="position:absolute;left:1013px;top:447px;" width="8" height="7" viewBox="0 0 8 7"><path d="M4 5.5 L7 1.5 L1 1.5 Z" fill="#9e9e9e"/></svg>
<div style="position:absolute;left:746px;top:143.27px;font-size:11.5px;line-height:11.5px;color:#5c5c5c;white-space:nowrap;transform-origin:left;transform:scaleX(0.9969);"><span style="color:#484848;-webkit-text-stroke:.35px #484848">Done! Your formal financial summary is ready.</span></div>
<div style="position:absolute;left:747.6px;top:159.4px;width:11px;height:10.6px;background:#3cc46f;border-radius:1.5px;"></div>
<svg style="position:absolute;left:747.6px;top:159.4px;" width="11" height="11" viewBox="0 0 11 11"><path d="M2.6 5.6 L4.6 7.6 L8.6 3.4" fill="none" stroke="#fff" stroke-width="1.2"/></svg>
<div style="position:absolute;left:768.4px;top:181.29px;font-size:11px;line-height:11px;color:#5c5c5c;white-space:nowrap;transform-origin:left;transform:scaleX(1.0011);"><span style="color:#484848;-webkit-text-stroke:.35px #484848">New sheet:</span> <i>Financial Summary</i></div>
<div style="position:absolute;left:755.4px;top:186.0px;width:2.6px;height:2.6px;background:#5c5c5c;border-radius:50%;"></div>
<div style="position:absolute;left:768.4px;top:197.19px;font-size:11px;line-height:11px;color:#5c5c5c;white-space:nowrap;transform-origin:left;transform:scaleX(1.0103);"><span style="color:#484848;-webkit-text-stroke:.35px #484848">Grand Total: $68,250</span></div>
<div style="position:absolute;left:755.4px;top:201.9px;width:2.6px;height:2.6px;background:#5c5c5c;border-radius:50%;"></div>
<div style="position:absolute;left:768.4px;top:213.19px;font-size:11px;line-height:11px;color:#5c5c5c;white-space:nowrap;transform-origin:left;transform:scaleX(0.9984);"><span style="color:#484848;-webkit-text-stroke:.35px #484848">By Destination (Sum of Cost):</span> Las Vegas</div>
<div style="position:absolute;left:755.4px;top:217.9px;width:2.6px;height:2.6px;background:#5c5c5c;border-radius:50%;"></div>
<div style="position:absolute;left:768.4px;top:229.19px;font-size:11px;line-height:11px;color:#5c5c5c;white-space:nowrap;transform-origin:left;transform:scaleX(0.9678);"><span style="color:#484848;-webkit-text-stroke:.35px #484848">$14,410</span>, Boston <span style="color:#484848;-webkit-text-stroke:.35px #484848">$12,850</span>, Orlando <span style="color:#484848;-webkit-text-stroke:.35px #484848">$12,820</span>,</div>
<div style="position:absolute;left:768.4px;top:245.19px;font-size:11px;line-height:11px;color:#5c5c5c;white-space:nowrap;transform-origin:left;transform:scaleX(0.9609);">New York City <span style="color:#484848;-webkit-text-stroke:.35px #484848">$10,810</span>, New Orleans <span style="color:#484848;-webkit-text-stroke:.35px #484848">$10,010</span>,</div>
<div style="position:absolute;left:768.4px;top:261.19px;font-size:11px;line-height:11px;color:#5c5c5c;white-space:nowrap;transform-origin:left;transform:scaleX(1.0061);">Atlanta <span style="color:#484848;-webkit-text-stroke:.35px #484848">$7,350</span></div>
<div style="position:absolute;left:768.4px;top:277.19px;font-size:11px;line-height:11px;color:#5c5c5c;white-space:nowrap;transform-origin:left;transform:scaleX(1.0004);"><span style="color:#484848;-webkit-text-stroke:.35px #484848">By Item (Sum of Cost):</span> Plane Tickets</div>
<div style="position:absolute;left:755.4px;top:281.9px;width:2.6px;height:2.6px;background:#5c5c5c;border-radius:50%;"></div>
<div style="position:absolute;left:768.4px;top:293.19px;font-size:11px;line-height:11px;color:#5c5c5c;white-space:nowrap;transform-origin:left;transform:scaleX(0.9753);"><span style="color:#484848;-webkit-text-stroke:.35px #484848">$19,400</span>, Hotel <span style="color:#484848;-webkit-text-stroke:.35px #484848">$18,500</span>, Meals <span style="color:#484848;-webkit-text-stroke:.35px #484848">$8,900</span>, Car</div>
<div style="position:absolute;left:768.4px;top:309.19px;font-size:11px;line-height:11px;color:#5c5c5c;white-space:nowrap;transform-origin:left;transform:scaleX(0.9849);">Rental <span style="color:#484848;-webkit-text-stroke:.35px #484848">$9,600</span>, Convention Fees <span style="color:#484848;-webkit-text-stroke:.35px #484848">$4,320</span>,</div>
<div style="position:absolute;left:768.4px;top:325.19px;font-size:11px;line-height:11px;color:#5c5c5c;white-space:nowrap;transform-origin:left;transform:scaleX(0.9809);">Supplies <span style="color:#484848;-webkit-text-stroke:.35px #484848">$3,300</span>, Rideshare <span style="color:#484848;-webkit-text-stroke:.35px #484848">$2,260</span>, Misc</div>
<div style="position:absolute;left:768.4px;top:341.19px;font-size:11px;line-height:11px;color:#5c5c5c;white-space:nowrap;transform-origin:left;transform:scaleX(0.9448);"><span style="color:#484848;-webkit-text-stroke:.35px #484848">$1,970</span></div>
<div style="position:absolute;left:768.4px;top:357.19px;font-size:11px;line-height:11px;color:#5c5c5c;white-space:nowrap;transform-origin:left;transform:scaleX(1.0295);"><span style="color:#484848;-webkit-text-stroke:.35px #484848">Breakdowns included:</span></div>
<div style="position:absolute;left:755.4px;top:361.9px;width:2.6px;height:2.6px;background:#5c5c5c;border-radius:50%;"></div>
<div style="position:absolute;left:768.4px;top:421.49px;font-size:11px;line-height:11px;color:#5c5c5c;white-space:nowrap;transform-origin:left;transform:scaleX(1.0116);"><span style="color:#484848;-webkit-text-stroke:.35px #484848">Visuals added:</span> Column chart (<span style="color:#484848;-webkit-text-stroke:.35px #484848">Cost by</span></div>
<div style="position:absolute;left:755.4px;top:426.2px;width:2.6px;height:2.6px;background:#5c5c5c;border-radius:50%;"></div>
<div style="position:absolute;left:768.4px;top:437.49px;font-size:11px;line-height:11px;color:#5c5c5c;white-space:nowrap;transform-origin:left;transform:scaleX(1.0246);"><span style="color:#484848;-webkit-text-stroke:.35px #484848">Destination</span>) and Pie chart (<span style="color:#484848;-webkit-text-stroke:.35px #484848">Cost by Item</span>) for</div>
<div style="position:absolute;left:790.8px;top:372.99px;font-size:11px;line-height:11px;color:#5c5c5c;white-space:nowrap;transform-origin:left;transform:scaleX(1.0241);">Pivot: <span style="color:#484848;-webkit-text-stroke:.35px #484848">Cost by Destination</span></div>
<div style="position:absolute;left:777.6px;top:377.7px;width:2.6px;height:2.6px;background:#5c5c5c;border-radius:50%;"></div>
<div style="position:absolute;left:790.8px;top:388.99px;font-size:11px;line-height:11px;color:#5c5c5c;white-space:nowrap;transform-origin:left;transform:scaleX(1.0116);">Pivot: <span style="color:#484848;-webkit-text-stroke:.35px #484848">Cost by Item</span></div>
<div style="position:absolute;left:777.6px;top:393.7px;width:2.6px;height:2.6px;background:#5c5c5c;border-radius:50%;"></div>
<div style="position:absolute;left:790.8px;top:404.99px;font-size:11px;line-height:11px;color:#5c5c5c;white-space:nowrap;transform-origin:left;transform:scaleX(1.0567);">Pivot: <span style="color:#484848;-webkit-text-stroke:.35px #484848">Item × Destination Matrix</span></div>
<div style="position:absolute;left:777.6px;top:409.7px;width:2.6px;height:2.6px;background:#5c5c5c;border-radius:50%;"></div>
<div style="position:absolute;left:801px;top:453.6px;width:1.2px;height:1.2px;background:#5c5c5c;"></div>
<div style="position:absolute;left:833.5px;top:453.6px;width:1.2px;height:1.2px;background:#5c5c5c;"></div>
<div style="position:absolute;left:742.9px;top:464.4px;width:258.4px;height:64.6px;background:#fff;border-radius:9px;box-shadow:0 0 8px rgba(0,0,0,.11), 0 3px 6px rgba(0,0,0,.05);"></div>
<div style="position:absolute;left:755.8px;top:477.99px;font-size:11px;line-height:11px;color:#707070;white-space:nowrap;transform-origin:left;transform:scaleX(1.0239);">Describe what you'd like to create or edit</div>
<div style="position:absolute;left:749.5px;top:496.5px;width:51.5px;height:25.3px;background:#f0f0f0;border-radius:5px;"></div>
<svg style="position:absolute;left:759px;top:501.5px;" width="16" height="16" viewBox="0 0 16 16"><path d="M1.2 14.8 L2 10.9 L10.3 2.6 Q11.6 1.3 12.9 2.6 L13.4 3.1 Q14.7 4.4 13.4 5.7 L5.1 14 Z" fill="#107c41"/><path d="M9.6 4.2 L11.8 6.4" stroke="#f0f0f0" stroke-width=".6"/></svg>
<svg style="position:absolute;left:782px;top:504px;" width="10" height="10" viewBox="0 0 10 10"><path d="M1.5 1.5 L8 8 M8 1.5 L1.5 8" stroke="#424242" stroke-width="1.1"/></svg>
<div style="position:absolute;left:790px;top:540.53px;font-size:10px;line-height:10px;color:#616161;white-space:nowrap;transform-origin:left;transform:scaleX(0.9642);">AI-generated content may be incorrect</div>
<div style="position:absolute;left:17.2px;top:45.64px;font-size:12px;line-height:12px;color:#424242;white-space:nowrap;transform-origin:left;transform:scaleX(0.8065);">File</div>
<div style="position:absolute;left:50px;top:45.64px;font-size:12px;line-height:12px;color:#424242;white-space:nowrap;transform-origin:left;transform:scaleX(0.8980);">Home</div>
<div style="position:absolute;left:98.4px;top:45.64px;font-size:12px;line-height:12px;color:#424242;white-space:nowrap;transform-origin:left;transform:scaleX(0.9062);">Insert</div>
<div style="position:absolute;left:144.4px;top:45.64px;font-size:12px;line-height:12px;color:#424242;white-space:nowrap;transform-origin:left;transform:scaleX(0.8585);">Share</div>
<div style="position:absolute;left:191.25px;top:45.64px;font-size:12px;line-height:12px;color:#424242;white-space:nowrap;transform-origin:left;transform:scaleX(0.8866);">Page Layout</div>
<div style="position:absolute;left:271px;top:45.64px;font-size:12px;line-height:12px;color:#424242;white-space:nowrap;transform-origin:left;transform:scaleX(0.8797);">Formulas</div>
<div style="position:absolute;left:334.4px;top:45.64px;font-size:12px;line-height:12px;color:#424242;white-space:nowrap;transform-origin:left;transform:scaleX(0.9109);">Data</div>
<div style="position:absolute;left:376.25px;top:45.64px;font-size:12px;line-height:12px;color:#424242;white-space:nowrap;transform-origin:left;transform:scaleX(0.8727);">Review</div>
<div style="position:absolute;left:428.75px;top:45.64px;font-size:12px;line-height:12px;color:#424242;white-space:nowrap;transform-origin:left;transform:scaleX(0.9323);">View</div>
<div style="position:absolute;left:471.6px;top:45.64px;font-size:12px;line-height:12px;color:#424242;white-space:nowrap;transform-origin:left;transform:scaleX(0.9421);">Automate</div>
<div style="position:absolute;left:539px;top:45.64px;font-size:12px;line-height:12px;color:#424242;white-space:nowrap;transform-origin:left;transform:scaleX(0.9397);">Help</div>
<div style="position:absolute;left:581px;top:45.64px;font-size:12px;line-height:12px;color:#424242;white-space:nowrap;transform-origin:left;transform:scaleX(0.9013);">Draw</div>
<div style="position:absolute;left:739.7px;top:46.09px;font-size:11px;line-height:11px;color:#333;white-space:nowrap;transform-origin:left;transform:scaleX(0.8573);">Comments</div>
<div style="position:absolute;left:821.7px;top:46.09px;font-size:11px;line-height:11px;color:#333;white-space:nowrap;transform-origin:left;transform:scaleX(0.8517);">Catch up</div>
<div style="position:absolute;left:895.7px;top:46.09px;font-size:11px;line-height:11px;color:#333;white-space:nowrap;transform-origin:left;transform:scaleX(0.8621);">Editing</div>
<div style="position:absolute;left:974.2px;top:46.09px;font-size:11px;line-height:11px;color:#fff;white-space:nowrap;transform-origin:left;transform:scaleX(0.8072);">Share</div>
<div style="position:absolute;left:10.5px;top:74.89px;font-size:11px;line-height:11px;color:#242424;white-space:nowrap;transform-origin:left;transform:scaleX(0.8167);">A1</div>
<div style="position:absolute;left:195px;top:73.04px;font-size:12px;line-height:12px;color:#242424;white-space:nowrap;transform-origin:left;transform:scaleX(0.8637);">Financial Summary</div>
<svg style="position:absolute;left:289px;top:73.5px;" width="10" height="11" viewBox="0 0 10 11"><rect x="1.00" y="0" width="8.20" height="9.90" fill="#e7e2f1"/><rect x="2.40" y="1.32" width="5.50" height="0.49" fill="#a9a4b6"/><rect x="2.40" y="2.58" width="5.50" height="0.49" fill="#a9a4b6"/><rect x="2.40" y="3.85" width="5.50" height="0.49" fill="#a9a4b6"/><rect x="2.40" y="5.12" width="5.50" height="0.49" fill="#a9a4b6"/><rect x="2.40" y="6.38" width="5.50" height="0.49" fill="#a9a4b6"/><rect x="2.40" y="7.65" width="5.50" height="0.49" fill="#a9a4b6"/>
<path d="M0 9.46 Q0 11.00 1.50 11.00 H7.00 Q5.80 10.23 5.80 9.02 H0 Z" fill="#c6b4e2"/></svg>
<div style="position:absolute;left:84.4px;top:539.04px;font-size:12px;line-height:12px;color:#424242;white-space:nowrap;transform-origin:left;transform:scaleX(0.8542);">Sheet1</div>
<div style="position:absolute;left:133.2px;top:539.04px;font-size:12px;line-height:12px;color:#424242;white-space:nowrap;transform-origin:left;transform:scaleX(0.9177);">City Comparison</div>
<div style="position:absolute;left:232px;top:539.04px;font-size:12px;line-height:12px;color:#424242;white-space:nowrap;transform-origin:left;transform:scaleX(0.9317);">Itinerary</div>
<div style="position:absolute;left:288.5px;top:539.04px;font-size:12px;line-height:12px;color:#242424;white-space:nowrap;transform-origin:left;transform:scaleX(0.9269);"><span style="-webkit-text-stroke:.28px #242424">Financial Summary</span></div>
</body></html>
